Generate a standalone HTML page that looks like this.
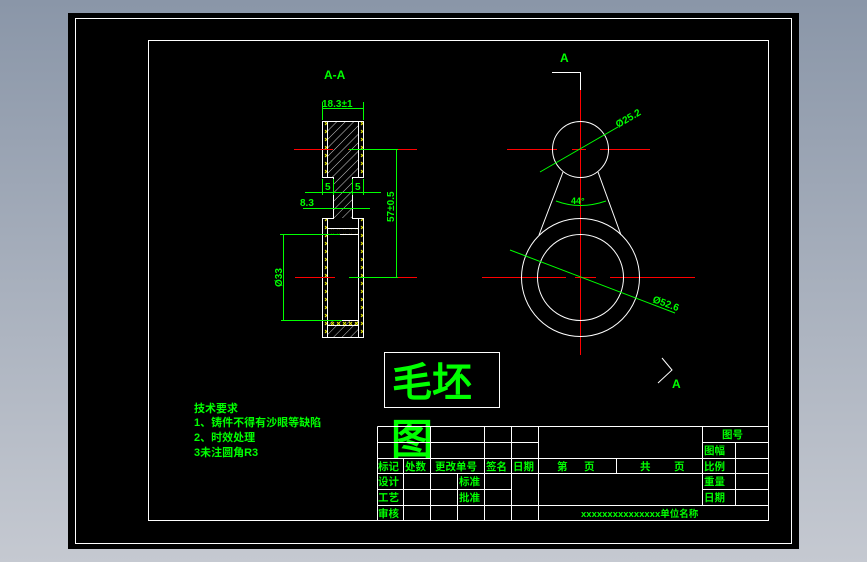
<!DOCTYPE html>
<html><head><meta charset="utf-8"><style>
html,body{margin:0;padding:0;width:867px;height:562px;overflow:hidden}
svg{display:block}
text{font-family:"Liberation Sans","WenQuanYi Zen Hei","Noto Sans CJK SC",sans-serif;fill:#00ff00;font-weight:bold}
</style></head><body>
<svg width="867" height="562" viewBox="0 0 867 562" xmlns="http://www.w3.org/2000/svg">
<defs>
<linearGradient id="bg" x1="0" y1="0" x2="0" y2="1"><stop offset="0" stop-color="#8a96a8"/><stop offset="1" stop-color="#c5c9d1"/></linearGradient>
<pattern id="hatch" width="6" height="6" patternUnits="userSpaceOnUse" patternTransform="rotate(45)"><line x1="0" y1="0" x2="0" y2="6" stroke="#fff" stroke-width="0.8"/></pattern>
<pattern id="cross" width="6" height="8" patternUnits="userSpaceOnUse"><path d="M1 2 L4 5 M4 2 L1 5" stroke="#e8e800" stroke-width="1"/></pattern>
</defs>
<rect width="867" height="562" fill="url(#bg)"/>
<rect x="68" y="13" width="731" height="536" fill="#000"/>
<g fill="none" stroke="#fff" stroke-width="1">
<rect x="75.5" y="18.5" width="716" height="525"/>
<rect x="148.5" y="40.5" width="620" height="480"/>
</g>

<text x="324" y="79" font-size="12" font-family="Liberation Mono">A-A</text>
<g>
<path d="M327 121 H358 V177 H352 V218 H333 V177 H327 Z" fill="url(#hatch)"/>
<rect x="327" y="320" width="31" height="17" fill="url(#hatch)"/>
<rect x="322" y="121" width="5" height="56" fill="url(#cross)"/>
<rect x="358" y="121" width="5" height="56" fill="url(#cross)"/>
<rect x="322" y="218" width="5" height="119" fill="url(#cross)"/>
<rect x="358" y="218" width="5" height="119" fill="url(#cross)"/>
<rect x="327" y="228" width="31" height="6" fill="url(#cross)"/>
<rect x="327" y="320" width="31" height="5" fill="url(#cross)"/>
</g>
<g fill="none" stroke="#fff" stroke-width="1">
<path d="M322.5 121.5 H363.5 V177.5 H352.5 V218.5 H363.5 V337.5 H322.5 V218.5 H333.5 V177.5 H322.5 Z"/>
<path d="M327.5 121.5 V177.5 M358.5 121.5 V177.5 M333.5 177.5 V218.5 M352.5 177.5 V218.5"/>
<rect x="327.5" y="234.5" width="31" height="86"/>
<path d="M327.5 218.5 V337.5 M358.5 218.5 V337.5 M327.5 228.5 H358.5 M327.5 325.5 H358.5"/>
</g>
<g stroke="#ff0000" stroke-width="1">
<line x1="294" y1="149.5" x2="333" y2="149.5"/><line x1="348" y1="149.5" x2="417" y2="149.5"/>
<line x1="295" y1="277.5" x2="335" y2="277.5"/><line x1="349" y1="277.5" x2="417" y2="277.5"/>
</g>
<g stroke="#00ff00" stroke-width="1" fill="none">
<line x1="322.5" y1="108.5" x2="363.5" y2="108.5"/>
<line x1="322.5" y1="102" x2="322.5" y2="120"/><line x1="363.5" y1="102" x2="363.5" y2="120"/>
<line x1="349" y1="149.5" x2="398" y2="149.5"/><line x1="349" y1="277.5" x2="398" y2="277.5"/>
<line x1="396.5" y1="149" x2="396.5" y2="277"/>
<line x1="305" y1="192.5" x2="381" y2="192.5"/>
<line x1="322.5" y1="179" x2="322.5" y2="195"/><line x1="333.5" y1="179" x2="333.5" y2="195"/>
<line x1="352.5" y1="179" x2="352.5" y2="195"/><line x1="363.5" y1="179" x2="363.5" y2="195"/>
<line x1="303" y1="208.5" x2="370" y2="208.5"/>
<line x1="280" y1="234.5" x2="340" y2="234.5"/><line x1="281" y1="320.5" x2="342" y2="320.5"/>
<line x1="283.5" y1="234" x2="283.5" y2="320"/>
</g>
<text x="322" y="107" font-size="10" font-family="Liberation Mono">18.3±1</text>
<text x="325" y="190" font-size="10" font-family="Liberation Mono">5</text>
<text x="355" y="190" font-size="10" font-family="Liberation Mono">5</text>
<text x="300" y="206" font-size="10" font-family="Liberation Mono">8.3</text>
<text transform="translate(394,222) rotate(-90)" font-size="10" font-family="Liberation Mono">57±0.5</text>
<text transform="translate(282,287) rotate(-90)" font-size="10" font-family="Liberation Mono">Ø33</text>

<text x="560" y="62" font-size="12" font-family="Liberation Mono">A</text>
<path d="M552 72.5 H580.5 V90" fill="none" stroke="#fff" stroke-width="1"/>
<g stroke="#ff0000" stroke-width="1">
<line x1="580.5" y1="90" x2="580.5" y2="355"/>
<line x1="507" y1="149.5" x2="557" y2="149.5"/><line x1="572" y1="149.5" x2="586" y2="149.5"/><line x1="600" y1="149.5" x2="650" y2="149.5"/>
<line x1="482" y1="277.5" x2="566" y2="277.5"/><line x1="575" y1="277.5" x2="596" y2="277.5"/><line x1="610" y1="277.5" x2="695" y2="277.5"/>
</g>
<g fill="none" stroke="#fff" stroke-width="1">
<circle cx="580.5" cy="149.5" r="28"/>
<circle cx="580.5" cy="277.5" r="59"/>
<circle cx="580.5" cy="277.5" r="43"/>
<line x1="563" y1="172" x2="539" y2="235"/>
<line x1="598" y1="172" x2="621" y2="235"/>
<path d="M662 358 L672 370 L658 383"/>
</g>
<g fill="none" stroke="#00ff00" stroke-width="1">
<line x1="540" y1="172" x2="618" y2="127"/>
<line x1="510" y1="250" x2="675" y2="313"/>
<path d="M556 201 Q580 210 606 201"/>
</g>
<text transform="translate(618,128) rotate(-30)" font-size="10" font-family="Liberation Mono">Ø25.2</text>
<text transform="translate(652,302) rotate(20)" font-size="10" font-family="Liberation Mono">Ø52.6</text>
<text x="571" y="204" font-size="9" font-family="Liberation Mono">44°</text>
<text x="672" y="388" font-size="12" font-family="Liberation Mono">A</text>

<rect x="384.5" y="352.5" width="115" height="55" fill="none" stroke="#fff" stroke-width="1"/>
<text x="392" y="396" font-size="40" style="font-weight:normal" stroke="#00ff00" stroke-width="1.3">毛坯</text>
<text x="391" y="454" font-size="42" style="font-weight:normal" stroke="#00ff00" stroke-width="1.3">图</text>

<g font-size="11">
<text x="194" y="412">技术要求</text>
<text x="194" y="426">1、铸件不得有沙眼等缺陷</text>
<text x="194" y="441">2、时效处理</text>
<text x="194" y="456">3未注圆角R3</text>
</g>

<g fill="none" stroke="#fff" stroke-width="1">
<path d="M377.5 426.5 H768.5 M377.5 442.5 H538.5 M702.5 442.5 H768.5 M377.5 458.5 H768.5 M377.5 473.5 H768.5 M377.5 489.5 H511.5 M702.5 489.5 H768.5 M377.5 505.5 H768.5"/>
<path d="M377.5 426.5 V520.5 M430.5 426.5 V520.5 M484.5 426.5 V520.5 M511.5 426.5 V520.5 M538.5 426.5 V520.5 M702.5 426.5 V505.5"/>
<path d="M403.5 458.5 V520.5 M457.5 473.5 V520.5 M616.5 458.5 V473.5 M735.5 442.5 V458.5 M735.5 458.5 V505.5"/>
</g>
<g font-size="10.5">
<text x="722" y="438">图号</text>
<text x="704" y="454">图幅</text>
<text x="378" y="470">标记</text>
<text x="405" y="470">处数</text>
<text x="435" y="470">更改单号</text>
<text x="486" y="470">签名</text>
<text x="513" y="470">日期</text>
<text x="557" y="470">第</text><text x="584" y="470">页</text>
<text x="640" y="470">共</text><text x="674" y="470">页</text>
<text x="704" y="470">比例</text>
<text x="378" y="485">设计</text>
<text x="459" y="485">标准</text>
<text x="704" y="485">重量</text>
<text x="378" y="501">工艺</text>
<text x="459" y="501">批准</text>
<text x="704" y="501">日期</text>
<text x="378" y="517">审核</text>
<text x="581" y="517" font-size="9.5">xxxxxxxxxxxxxxx单位名称</text>
</g>
</svg>
</body></html>
